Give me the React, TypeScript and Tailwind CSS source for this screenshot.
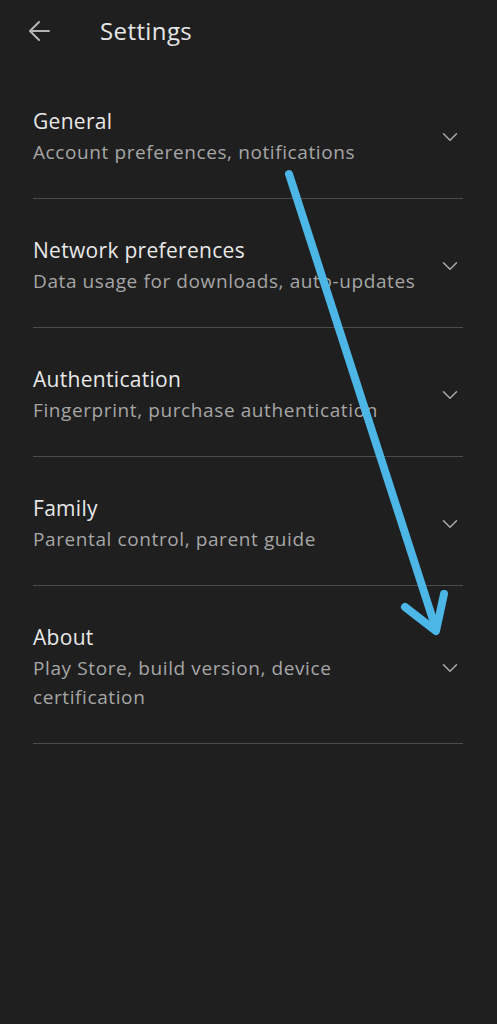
import { ChevronDown } from "lucide-react";

const sections = [
  { title: "General", subtitle: "Account preferences, notifications" },
  { title: "Network preferences", subtitle: "Data usage for downloads, auto-updates" },
  { title: "Authentication", subtitle: "Fingerprint, purchase authentication" },
  { title: "Family", subtitle: "Parental control, parent guide" },
  { title: "About", subtitle: "Play Store, build version, device certification" },
];

export default function App() {
  return (
    <div className="relative min-h-[1024px] w-full bg-[#1f1f1f] font-['Open_Sans',sans-serif] overflow-hidden">
      {/* Top bar */}
      <div className="flex h-[62px] items-center">
        <button className="ml-[28px] flex h-6 w-6 items-center justify-center text-[#b4b4b4]">
          <svg width="24" height="24" viewBox="0 0 24 24" fill="none" stroke="currentColor" strokeWidth="2" strokeLinecap="round" strokeLinejoin="round">
            <path d="M21 12H3" />
            <path d="M11 3l-9 9 9 9" />
          </svg>
        </button>
        <h1 className="ml-[48px] text-[24px] tracking-[0.4px] text-[#e6e6e6]">Settings</h1>
      </div>

      {/* Sections */}
      <div className="pt-[8px] pl-[33px] pr-[34px]">
        {sections.map((s) => (
          <div key={s.title} className="flex items-center border-b border-[#4b4b4b] pt-[37px] pb-[31px]">
            <div className="flex-1 pr-[8px]">
              <div className="text-[21px] leading-[28px] tracking-[0.3px] text-[#e8e8e8]">{s.title}</div>
              <div className="mt-[3px] text-[19px] leading-[29px] tracking-[0.6px] text-[#a6a6a6]">{s.subtitle}</div>
            </div>
            <ChevronDown className="h-[26px] w-[26px] shrink-0 text-[#a8a8a8]" strokeWidth={1.4} />
          </div>
        ))}
      </div>

      {/* Hand-drawn annotation arrow */}
      <svg className="pointer-events-none absolute left-0 top-0" width="497" height="1024" viewBox="0 0 497 1024" fill="none">
        <g stroke="#4cb6e6" strokeWidth="8" strokeLinecap="round" strokeLinejoin="round">
          <path d="M289 174 L436 629" />
          <path d="M405 607 L436 631 L444 594" />
        </g>
      </svg>
    </div>
  );
}
